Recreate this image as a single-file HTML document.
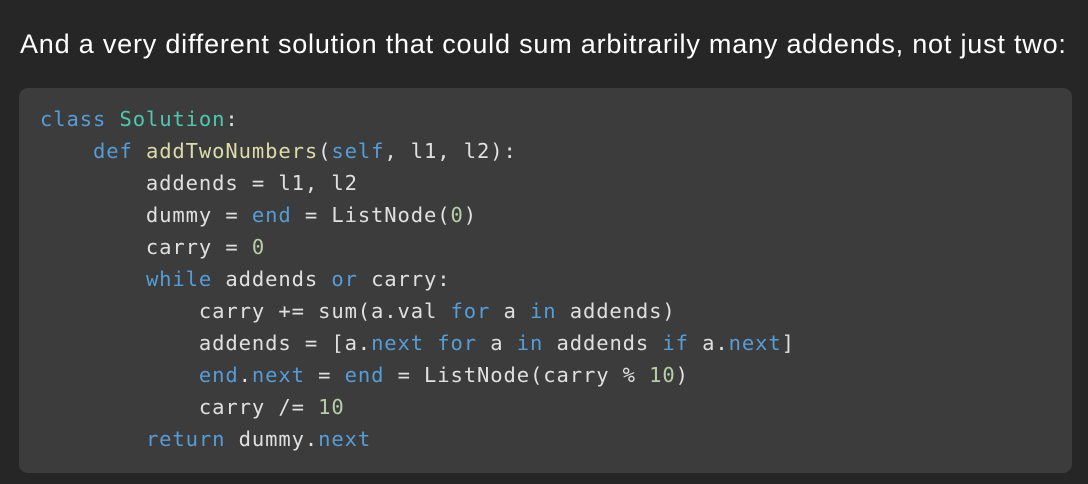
<!DOCTYPE html>
<html><head><style>
body{margin:0;background:#262626;width:1088px;height:484px;overflow:hidden;font-family:"Liberation Sans",sans-serif}
.h{position:absolute;left:20px;top:29px;color:#fff;font-size:27px;letter-spacing:0.8px;white-space:nowrap}
.box{position:absolute;left:19px;top:88px;width:1053px;height:385px;background:#3c3c3c;border-radius:9px}
pre{position:absolute;left:40px;top:103px;margin:0;font-family:"DejaVu Sans Mono","Liberation Mono",monospace;font-size:20.5px;line-height:32px;color:#e0e0e0;letter-spacing:0.9px}
.k{color:#569cd6}.c{color:#4ec9b0}.f{color:#dcdcaa}.n{color:#b5cea8}
</style></head><body>
<div class="h">And a very different solution that could sum arbitrarily many addends, not just two:</div>
<div class="box"></div>
<pre><span class="k">class</span> <span class="c">Solution</span>:
    <span class="k">def</span> <span class="f">addTwoNumbers</span>(<span class="k">self</span>, l1, l2):
        addends = l1, l2
        dummy = <span class="k">end</span> = ListNode(<span class="n">0</span>)
        carry = <span class="n">0</span>
        <span class="k">while</span> addends <span class="k">or</span> carry:
            carry += sum(a.val <span class="k">for</span> a <span class="k">in</span> addends)
            addends = [a.<span class="k">next</span> <span class="k">for</span> a <span class="k">in</span> addends <span class="k">if</span> a.<span class="k">next</span>]
            <span class="k">end</span>.<span class="k">next</span> = <span class="k">end</span> = ListNode(carry % <span class="n">10</span>)
            carry /= <span class="n">10</span>
        <span class="k">return</span> dummy.<span class="k">next</span></pre>
</body></html>
